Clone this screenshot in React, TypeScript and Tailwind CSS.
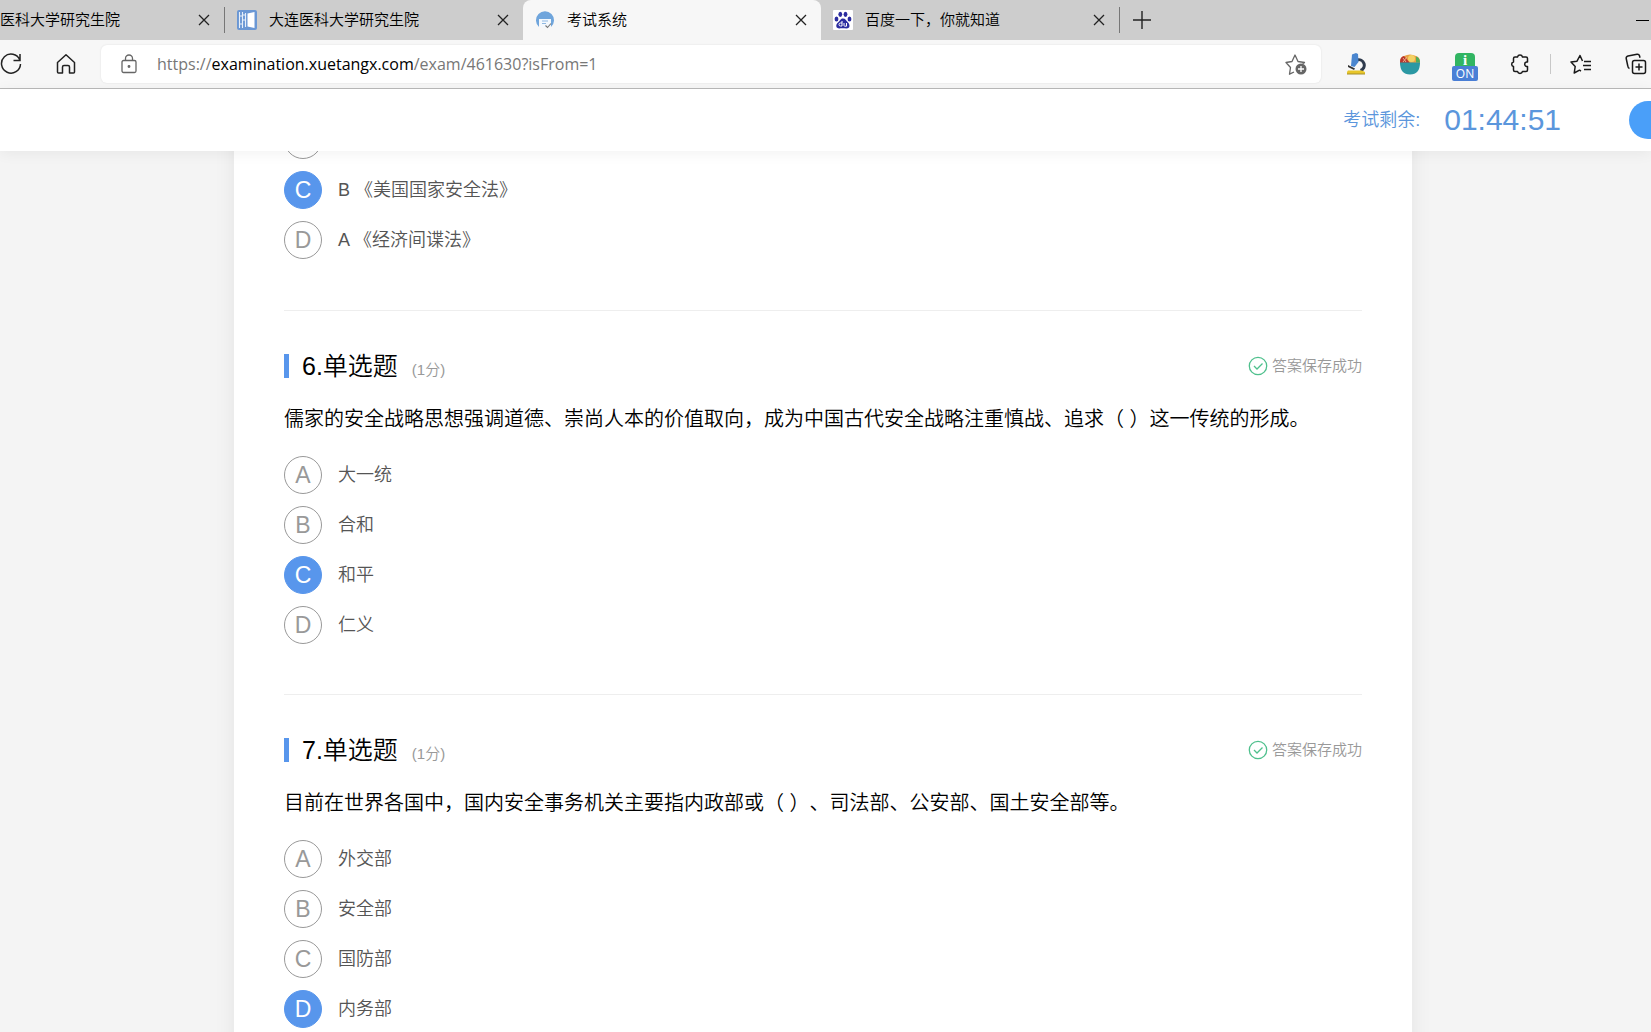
import type { ReactNode } from "react";

interface TabProps {
  title: string;
  icon?: ReactNode;
  active?: boolean;
  className?: string;
}

interface Option {
  key: string;
  label: string;
}

interface QuestionProps {
  id: number;
  text: string;
  options: Option[];
  answer: string;
}

const QUESTIONS: QuestionProps[] = [
  {
    id: 6,
    text: "儒家的安全战略思想强调道德、崇尚人本的价值取向，成为中国古代安全战略注重慎战、追求（ ）这一传统的形成。",
    answer: "C",
    options: [
      { key: "A", label: "大一统" },
      { key: "B", label: "合和" },
      { key: "C", label: "和平" },
      { key: "D", label: "仁义" },
    ],
  },
  {
    id: 7,
    text: "目前在世界各国中，国内安全事务机关主要指内政部或（ ）、司法部、公安部、国土安全部等。",
    answer: "D",
    options: [
      { key: "A", label: "外交部" },
      { key: "B", label: "安全部" },
      { key: "C", label: "国防部" },
      { key: "D", label: "内务部" },
    ],
  },
];

function BookIcon() {
  return (
    <svg viewBox="0 0 20 20" className="size-5 shrink-0">
      <rect width="20" height="20" rx="2" fill="#6a97d4" />
      <path d="M10.500 3.500l7-1.500v16l-7-1.500z" fill="#fff" />
      <path d="M2.500 2v16M5.500 2v16M8.500 3v14M2.500 6h3M5.500 10h3M2.500 14h3M5.500 5h3" stroke="#e6effa" strokeWidth="1.100" />
    </svg>
  );
}

function ExamIcon() {
  return (
    <svg viewBox="0 0 20 20" className="size-5 shrink-0">
      <path d="M4 17A9 9 0 1 1 16 17L16 9H4z" fill="#6fa5dc" />
      <path d="M5 9h11v7l-3 2-8-1z" fill="#f3f8fd" />
      <path d="M7 11h6M7 13.500h4" stroke="#8fb8e2" strokeWidth="1" fill="none" />
      <path d="M10.500 15.500l2 2 3.500-4" stroke="#777" strokeWidth="1.100" fill="none" />
    </svg>
  );
}

function PawIcon() {
  return (
    <svg viewBox="0 0 20 20" className="size-5 shrink-0">
      <rect width="20" height="20" rx="1" fill="#fff" />
      <g fill="#2c2da0">
        <ellipse cx="3.500" cy="9" rx="1.900" ry="2.500" />
        <ellipse cx="7.300" cy="4.300" rx="1.900" ry="2.600" />
        <ellipse cx="12.500" cy="4.300" rx="1.900" ry="2.600" />
        <ellipse cx="16.500" cy="9" rx="1.900" ry="2.500" />
        <path d="M10 8.500c2.500 0 3 2 5 4s2.500 6-1.500 6c-2 0-5-.5-7 0-4 0-4-4-1.500-6s2.500-4 5-4z" />
      </g>
      <path d="M9 11v5H7.500a1.300 1.300 0 0 1 0-3H9M11 13v2.500q0 .7.700.7H13.500V13" stroke="#fff" fill="none" />
    </svg>
  );
}

function Tab({ title, icon, active = false, className = "" }: TabProps) {
  return (
    <div
      className={`flex h-10 w-[298px] shrink-0 items-center px-3 ${
        active ? "rounded-t-lg bg-[#f7f7f7]" : ""
      } ${className}`}
    >
      {icon ?? <span className="size-5 shrink-0" />}
      <span className="ml-3 flex-1 truncate text-[15px] leading-5 font-[350] text-black">{title}</span>
      <button type="button" aria-label={`关闭 ${title}`} className="flex size-4 items-center justify-center">
        <svg viewBox="0 0 12 12" className="size-3" stroke="#222" strokeWidth="1.300">
          <path d="M1 1l10 10M11 1L1 11" />
        </svg>
      </button>
    </div>
  );
}

function TabBar() {
  return (
    <div className="flex h-10 items-center bg-[#cdcdcd]">
      <Tab title="大连医科大学研究生院" className="-ml-[74px]" />
      <span className="h-[26px] w-px shrink-0 bg-[#777]" />
      <Tab title="大连医科大学研究生院" icon={<BookIcon />} />
      <Tab title="考试系统" icon={<ExamIcon />} active />
      <Tab title="百度一下，你就知道" icon={<PawIcon />} />
      <span className="h-[26px] w-px shrink-0 bg-[#777]" />
      <button type="button" aria-label="新建标签页" className="ml-3 flex size-5 items-center justify-center">
        <svg viewBox="0 0 18 18" className="size-[18px]" stroke="#222" strokeWidth="1.400">
          <path d="M9 0v18M0 9h18" />
        </svg>
      </button>
      <button type="button" aria-label="最小化" className="mr-[2px] ml-auto flex h-5 w-[13px] items-center">
        <span className="h-px w-full bg-black" />
      </button>
    </div>
  );
}

function Toolbar() {
  return (
    <div className="flex h-[49px] items-center border-b border-[#b9b9b9] bg-[#f7f7f7]">
      <button type="button" aria-label="刷新">
        <svg viewBox="0 0 22 22" className="size-[22px]" fill="none" stroke="#222" strokeWidth="1.500">
          <path d="M19.800 7A9.500 9.500 0 1 0 20.500 11M20 1v6.500h-6.500" />
        </svg>
      </button>
      <button type="button" aria-label="主页" className="ml-[33px]">
        <svg viewBox="0 0 22 22" className="size-[22px]" fill="none" stroke="#222" strokeWidth="1.500" strokeLinejoin="round">
          <path d="M2.500 9.500L11 1.800l8.500 7.700V19q0 1-1 1h-4v-6q0-1.500-1.500-1.500h-4Q7.500 12.500 7.500 14v6h-4q-1 0-1-1z" />
        </svg>
      </button>
      <div className="ml-6 flex h-[38px] flex-1 items-center rounded-md bg-white pr-[14px] pl-5 shadow-[0_0_2px_#ddd]">
        <svg viewBox="0 0 16 20" className="h-5 w-4" fill="none" stroke="#666" strokeWidth="1.300">
          <rect x="1" y="6.500" width="14" height="12" rx="1.500" />
          <path d="M4.500 6.500V4.500a3.500 3.500 0 0 1 7 0v2" />
          <circle cx="8" cy="12.500" r=".8" fill="#666" />
        </svg>
        <a
          href="https://examination.xuetangx.com/exam/461630?isFrom=1"
          className="ml-5 flex-1 font-['Open_Sans',sans-serif] text-[16px] leading-6 text-[#777]"
        >
          https://<span className="text-black">examination.xuetangx.com</span>/exam/461630?isFrom=1
        </a>
        <button type="button" aria-label="添加到收藏夹">
          <svg viewBox="0 0 22 22" className="size-[22px]" fill="none" stroke="#666" strokeWidth="1.300" strokeLinejoin="round">
            <path d="M9 19l-4.500 2.200 1-6.700L1 9.500l6-1L10 2l3 6.500 6.500 1-2 1.700" />
            <circle cx="16" cy="16" r="5.500" fill="#666" stroke="none" />
            <path d="M16 13v6M13 16h6" stroke="#fff" />
          </svg>
        </button>
      </div>
      <div className="flex items-center pl-[25px]">
        <button type="button" aria-label="显微镜扩展">
          <svg viewBox="0 0 20 22" className="h-[22px] w-5">
            <path d="M11 7a5.500 5.500 0 0 1 3.500 10.500" fill="none" stroke="#2f3b4d" strokeWidth="3" />
            <path d="M6 1.500l4-1.500 2 1 .5 8-4 5-3.500-1z" fill="#4a86cf" />
            <path d="M2 12l7 3.500-1 1.500-6-3z" fill="#333" />
            <path d="M2 17.500h14l3 1.500v2H1v-2z" fill="#e8c62a" />
            <path d="M1 20.500h18v1H1z" fill="#a58f2a" />
          </svg>
        </button>
        <button type="button" aria-label="购物扩展" className="ml-[33px]">
          <svg viewBox="0 0 22 22" className="size-[22px]">
            <path d="M1 9q0-5 4-6 6-3 12 0 4 1 4 6v2H1z" fill="#e9a044" />
            <path d="M1 9q0-5 4-6l6 7H1z" fill="#b8352f" />
            <path d="M4 5l3 4M8 4L4 9" stroke="#e8b088" strokeWidth="1" />
            <circle cx="12.500" cy="5.500" r="3.500" fill="#f3d264" />
            <path d="M17 3.500q4 1 4 6h-4z" fill="#52ad5a" />
            <path d="M1 9.500h20q0 12-10 12T1 9.500z" fill="#2b98a3" />
          </svg>
        </button>
        <button type="button" aria-label="信息扩展" className="relative ml-8 h-[22px] w-6">
          <span className="mx-auto block h-[22px] w-5 rounded-sm bg-[#31b562] text-center font-['Liberation_Serif',serif] text-[15px] leading-[14px] font-bold text-white">
            i
          </span>
          <span className="absolute top-[13px] -left-px w-[26px] rounded-xs bg-[#4a7fd6] text-center font-['Open_Sans',sans-serif] text-[12px] leading-[15px] text-white">
            ON
          </span>
        </button>
        <button type="button" aria-label="扩展" className="ml-[33px]">
          <svg viewBox="0 0 20 22" className="h-[22px] w-5" fill="none" stroke="#1a1a1a" strokeWidth="1.500" strokeLinejoin="round">
            <path d="M5 4h2.500a2.600 2.600 0 0 1 5 0H16q1.500 0 1.500 1.500V9h-1a2.300 2.300 0 0 0 0 4.500h1V17q0 1.500-1.500 1.500h-3.500a2.600 2.600 0 0 1-5 0H5q-1.500 0-1.500-1.500v-3.500a2.300 2.300 0 0 1 0-4.500V5.500Q3.500 4 5 4z" />
          </svg>
        </button>
        <span className="ml-5 h-5 w-px bg-[#c8c8c8]" />
        <button type="button" aria-label="收藏夹" className="ml-[19px]">
          <svg viewBox="0 0 22 22" className="size-[22px]" fill="none" stroke="#1a1a1a" strokeWidth="1.500" strokeLinejoin="round">
            <path d="M12.500 8L10 2.500 7 8.200l-6 .8 4.200 4.500-1 6.500 5.300-2.800 1.500.8M14 8.500h7M13 12.500h8M14 16.500h7" />
          </svg>
        </button>
        <button type="button" aria-label="集锦" className="mr-1 ml-[33px]">
          <svg viewBox="0 0 22 22" className="size-[22px]" fill="none" stroke="#1a1a1a" strokeWidth="1.500" strokeLinejoin="round">
            <rect x="7.500" y="7.500" width="13" height="13" rx="2" />
            <path d="M14 10.500v7M10.500 14h7M4.500 15.500Q3 15 2.800 13L1.200 5.500Q1 3.500 3 3l9-1.800q2-.3 2.500 1.500l.5 2" />
          </svg>
        </button>
      </div>
    </div>
  );
}

function OptionRow({ name, option, checked }: { name: string; option: Option; checked: boolean }) {
  return (
    <label className="flex h-[38px] items-center gap-4">
      <input type="radio" name={name} defaultChecked={checked} className="peer sr-only" />
      <span className="flex size-[38px] shrink-0 items-center justify-center rounded-full border border-[#999] text-[23px] leading-6 text-[#999] peer-checked:border-[#5896ec] peer-checked:bg-[#5896ec] peer-checked:text-white">
        {option.key}
      </span>
      <span className="text-[18px] leading-6 font-[350] whitespace-pre text-[#555]">{option.label}</span>
    </label>
  );
}

function SavedMark() {
  return (
    <span className="flex items-center gap-1 text-[15px] leading-5 font-[350] text-[#999]">
      <svg viewBox="0 0 20 20" className="size-5" fill="none" stroke="#4fc08d" strokeWidth="1.300">
        <circle cx="10" cy="10" r="8.700" />
        <path d="M6 10l3 3 5.500-5.500" />
      </svg>
      答案保存成功
    </span>
  );
}

function Question({ id, text, options, answer }: QuestionProps) {
  return (
    <section className="border-t border-[#eee] pt-[37px] pb-[50px]">
      <div className="flex items-center justify-between">
        <h2 className="flex h-9 items-center text-[25px] leading-9 font-[350] text-black">
          <span className="mr-[13px] h-6 w-[5px] bg-[#5896ec]" />
          {id}.单选题
          <span className="mt-2 ml-[14px] text-[15px] leading-5 text-[#999]">(1分)</span>
        </h2>
        <SavedMark />
      </div>
      <p className="mt-[21px] text-[20px] leading-7 font-[350] text-black [text-spacing-trim:space-all]">{text}</p>
      <div className="mt-[23px] flex flex-col gap-3">
        {options.map((option) => (
          <OptionRow key={option.key} name={`q${id}`} option={option} checked={option.key === answer} />
        ))}
      </div>
    </section>
  );
}

export default function App() {
  return (
    <div className="flex h-screen flex-col overflow-hidden bg-[#f4f4f4] font-['Liberation_Sans','Noto_Sans_CJK_SC',sans-serif]">
      <TabBar />
      <Toolbar />
      <header className="relative z-10 flex h-[62px] shrink-0 items-center justify-end bg-white text-[#5b96dc] shadow-[0_2px_14px_rgba(0,0,0,0.06)]">
        <span className="text-[18px] leading-6 font-[350]">考试剩余:</span>
        <span className="ml-6 text-[30px] leading-9">01:44:51</span>
        <button type="button" aria-label="交卷" className="-mr-20 ml-[68px] h-[38px] w-[102px] rounded-full bg-[#4a9ff9]" />
      </header>
      <main className="min-h-0 flex-1 overflow-hidden pr-[239px] pl-[234px]">
        <div className="-mt-[30px] bg-white px-[50px] shadow-[0_0_20px_rgba(0,0,0,0.07)]">
          <div className="flex flex-col gap-3 pb-[51px]">
            <OptionRow name="q5" option={{ key: "B", label: "" }} checked={false} />
            <OptionRow name="q5" option={{ key: "C", label: "B 《美国国家安全法》" }} checked />
            <OptionRow name="q5" option={{ key: "D", label: "A 《经济间谍法》" }} checked={false} />
          </div>
          {QUESTIONS.map((question) => (
            <Question key={question.id} {...question} />
          ))}
        </div>
      </main>
    </div>
  );
}
